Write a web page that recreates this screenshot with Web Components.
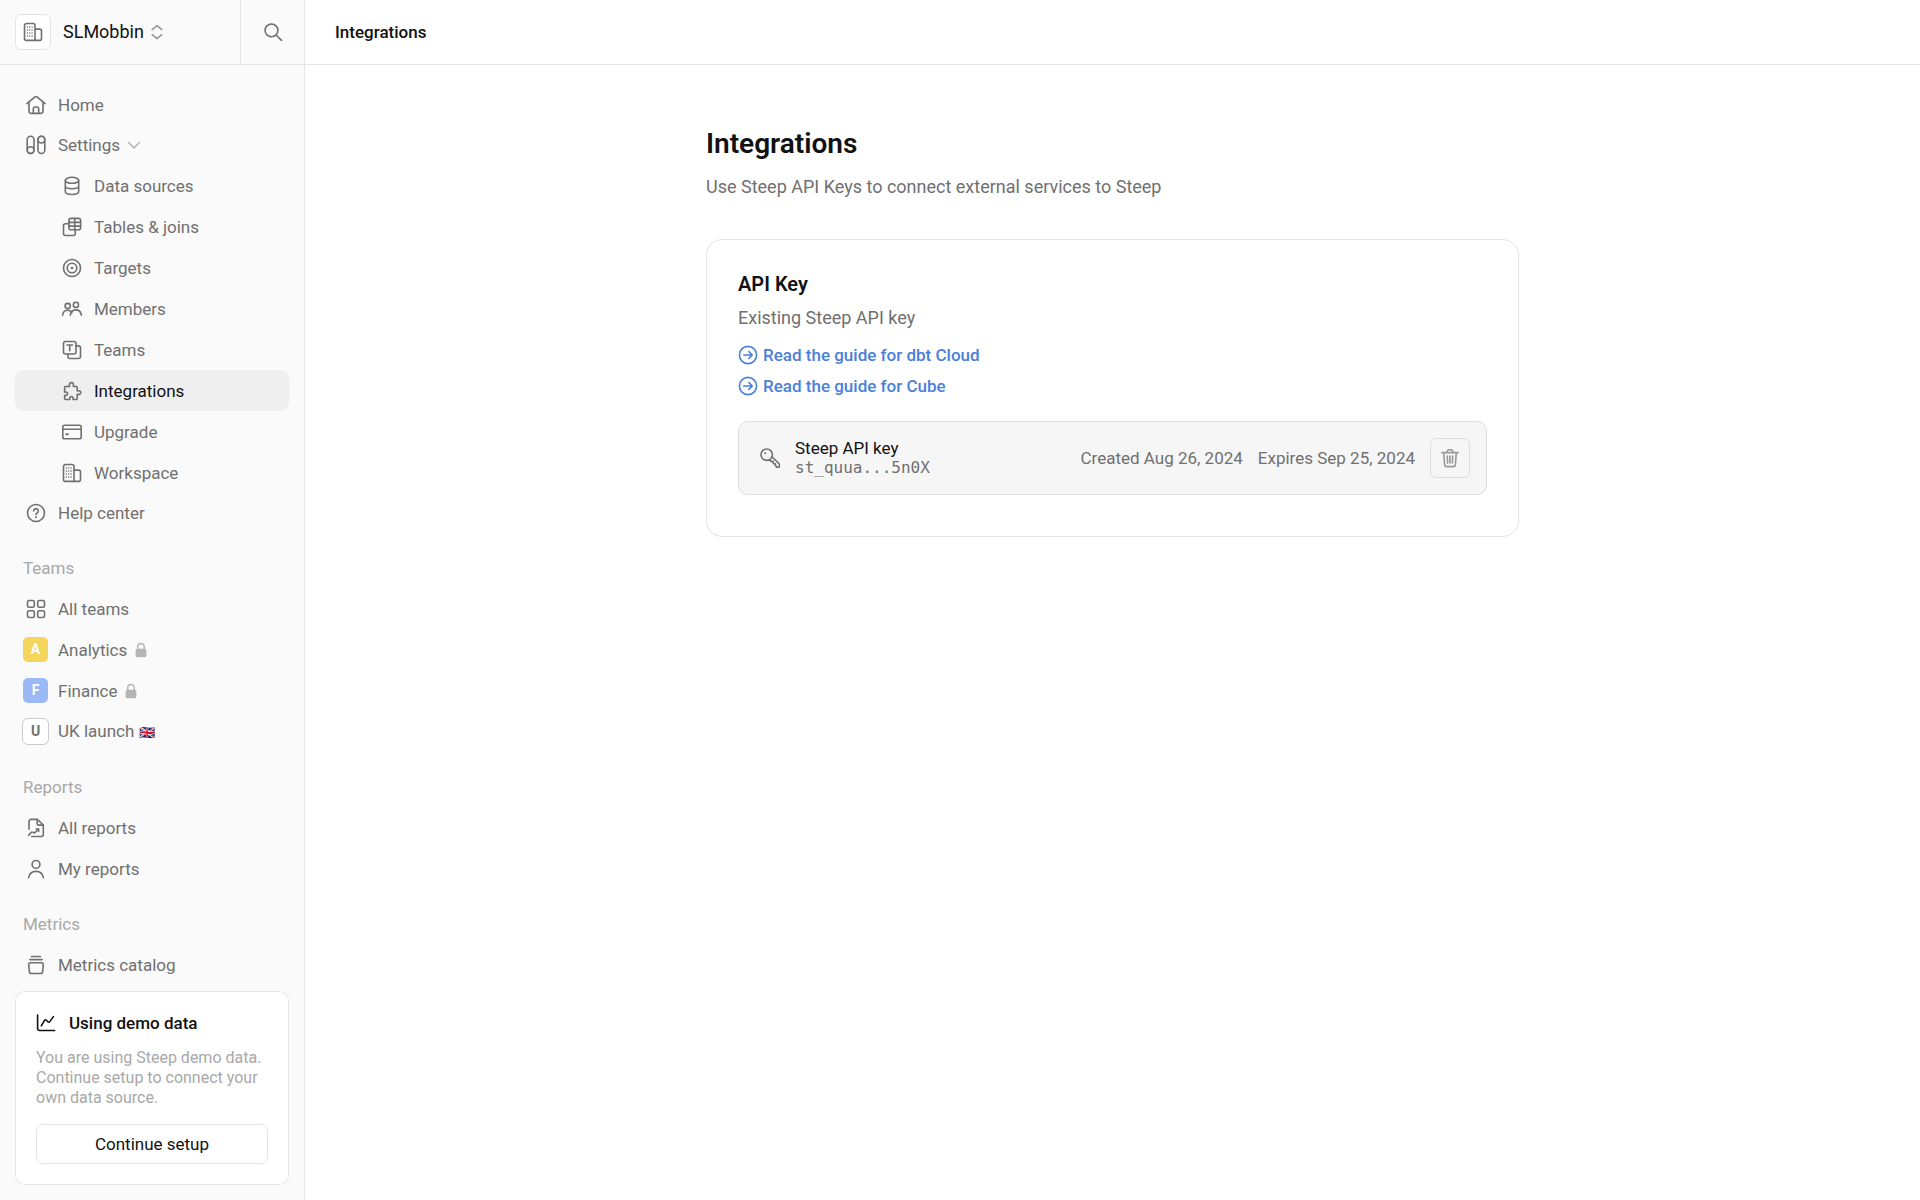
<!DOCTYPE html>
<html lang="en">
<head>
<meta charset="utf-8">
<meta name="viewport" content="width=device-width, initial-scale=1">
<title>Integrations</title>
<style>
  :root {
    --ink: #111111;
    --text: #707070;
    --muted: #a8a8a8;
    --line: #e4e4e4;
    --side: #fafafa;
    --hover: #efefef;
    --link: #4a80d9;
  }

  body {
    margin: 0;
    background: #fff;
    color: var(--ink);
    font-family: Roboto, "Liberation Sans", sans-serif;
    font-size: 17px;
    line-height: 22px;
  }
</style>
</head>
<body>

<app-shell>
  <side-bar slot="sidebar">
    <workspace-bar slot="top" name="SLMobbin"></workspace-bar>

    <nav-section>
      <nav-item icon="home">Home</nav-item>
      <nav-item icon="settings" expanded>Settings</nav-item>
      <nav-item icon="database" sub>Data sources</nav-item>
      <nav-item icon="tables" sub>Tables &amp; joins</nav-item>
      <nav-item icon="target" sub>Targets</nav-item>
      <nav-item icon="members" sub>Members</nav-item>
      <nav-item icon="teams" sub>Teams</nav-item>
      <nav-item icon="puzzle" sub active>Integrations</nav-item>
      <nav-item icon="card" sub>Upgrade</nav-item>
      <nav-item icon="building" sub>Workspace</nav-item>
      <nav-item icon="help">Help center</nav-item>
    </nav-section>

    <nav-section heading="Teams">
      <nav-item icon="grid">All teams</nav-item>
      <nav-item badge="A" color="#f3d65b" locked>Analytics</nav-item>
      <nav-item badge="F" color="#9ab9f5" locked>Finance</nav-item>
      <nav-item badge="U">UK launch <small>🇬🇧</small></nav-item>
    </nav-section>

    <nav-section heading="Reports">
      <nav-item icon="report">All reports</nav-item>
      <nav-item icon="person">My reports</nav-item>
    </nav-section>

    <nav-section heading="Metrics">
      <nav-item icon="catalog">Metrics catalog</nav-item>
    </nav-section>

    <demo-card slot="bottom" heading="Using demo data" action="Continue setup">
      You are using Steep demo data. Continue setup to connect your own data source.
    </demo-card>
  </side-bar>

  <page-header slot="header">Integrations</page-header>

  <settings-page heading="Integrations">
    <span slot="intro">Use Steep API Keys to connect external services to Steep</span>
    <settings-card heading="API Key">
      <span slot="intro">Existing Steep API key</span>
      <guide-link slot="links" href="#dbt-cloud">Read the guide for dbt Cloud</guide-link>
      <guide-link slot="links" href="#cube">Read the guide for Cube</guide-link>
      <api-key-row name="Steep API key" key-preview="st_quua...5n0X" created="Aug 26, 2024" expires="Sep 25, 2024"></api-key-row>
    </settings-card>
  </settings-page>
</app-shell>

<script>
// All icons live on a 20x20 grid and take their colour from the text.
const ICONS = {
  home: '<path d="M.9 8.6 9 1.9a1.6 1.6 0 0 1 2 0l8.100 6.700"/><path d="M3 7.200v9a2.200 2.200 0 0 0 2.200 2.200h9.600a2.200 2.200 0 0 0 2.200-2.200v-9"/><path d="M7.300 18.300v-4.600A1.700 1.700 0 0 1 9 12h2a1.700 1.700 0 0 1 1.700 1.700v4.600"/>',
  settings: '<rect x="1.200" y="1.200" width="6.800" height="17.300" rx="3.400"/><circle cx="4.600" cy="15.100" r="3.400"/><rect x="12" y="1.200" width="6.800" height="17.300" rx="3.400"/><circle cx="15.400" cy="4.600" r="3.400"/>',
  database: '<ellipse cx="10" cy="4.300" rx="6.700" ry="3"/><path d="M3.300 4.300v11.200c0 1.700 3 3 6.700 3s6.700-1.300 6.700-3V4.300M3.300 9.800c0 1.700 3 3 6.700 3s6.700-1.300 6.700-3"/>',
  tables: '<path d="M6.700 6.800H3.500a2 2 0 0 0-2 2v7.700a2 2 0 0 0 2 2h7.800a2 2 0 0 0 2-2v-3.100"/><rect x="6.900" y="1.400" width="11.700" height="11.400" rx="2"/><path d="M7 5.400h11.500M7 9.100h11.500M12.700 1.500v11.200"/>',
  target: '<circle cx="10" cy="10" r="8.500"/><circle cx="10" cy="10" r="4.800"/><circle cx="10" cy="10" r="1.300" fill="currentColor" stroke="none"/>',
  members: '<circle cx="5.700" cy="7" r="2.600"/><circle cx="13.900" cy="5.900" r="2.600"/><path d="M.6 16.200c.4-3 2.400-4.900 5-4.900 2 0 3.400 1 4.300 2.700M8.300 16.200c.4-3.200 2.600-5.300 5.500-5.300 2.800 0 5.100 2.100 5.600 5.300"/>',
  teams: '<rect x="1.500" y="1.500" width="12.500" height="12.500" rx="2"/><path d="M5 5h5.500M7.750 5v5.800M14 5.900h2.500a2 2 0 0 1 2 2v8.600a2 2 0 0 1-2 2H8a2 2 0 0 1-2-2V14"/>',
  puzzle: '<path d="M3.800 5.500h3.400c.4 0 .6-.4.4-.8a2.100 2.100 0 1 1 3.700 0c-.2.400 0 .8.4.8h2.500a1 1 0 0 1 1 1v2.900c0 .5.400.7.800.5a1.900 1.900 0 1 1 0 3.400c-.4-.2-.8 0-.8.5v3.700a1 1 0 0 1-1 1h-2.700c-.4 0-.6-.3-.5-.7a1.700 1.700 0 1 0-3.200 0c.1.400-.1.700-.5.700H3.600a1 1 0 0 1-1-1v-2.700c0-.4.300-.6.700-.5a1.700 1.700 0 1 0 0-3.200c-.4.100-.7-.1-.7-.5V6.500a1 1 0 0 1 1.200-1z"/>',
  card: '<rect x=".8" y="3.300" width="18.400" height="13.400" rx="1.800"/><path d="M.8 7.200h18.400"/><path d="M4.400 12.200h1.400" stroke-width="2"/>',
  building: '<path d="M12 18.400H3.500a2 2 0 0 1-2-2V3.500a2 2 0 0 1 2-2H10a2 2 0 0 1 2 2z"/><path d="M12 7.100h4.500a2 2 0 0 1 2 2v7.300a2 2 0 0 1-2 2H12"/><path d="M4.400 5v9.500M6.750 5v9.500M9.100 5v9.500" stroke-width="1.500" stroke-dasharray="0 3"/>',
  help: '<circle cx="10" cy="10" r="8.500"/><path d="M7.700 7.900a2.300 2.300 0 1 1 3.400 2.100c-.8.400-1.100.8-1.100 1.600"/><circle cx="10" cy="14.200" r="1" fill="currentColor" stroke="none"/>',
  grid: '<rect x="1.500" y="1.500" width="6.800" height="6.800" rx="1.600"/><rect x="11.700" y="1.500" width="6.800" height="6.800" rx="1.600"/><rect x="1.500" y="11.700" width="6.800" height="6.800" rx="1.600"/><rect x="11.700" y="11.700" width="6.800" height="6.800" rx="1.600"/>',
  report: '<path d="M3 11.200V3.400a2 2 0 0 1 2-2h6.300L17.300 7v9.500a2 2 0 0 1-2 2H5.800"/><path d="M11.100 1.600v4a1.500 1.500 0 0 0 1.500 1.500h4.600"/><path d="m2.600 17.300 2.700-2.900c.6-.6 1.300-.5 1.900 0 .7.600 1.400.6 2 0l3.200-3.200"/><path d="M10.200 11h2.400v2.400"/>',
  person: '<circle cx="10" cy="5.400" r="3.900"/><path d="M2.600 18.600c.7-3.900 3.600-6.200 7.400-6.200s6.700 2.300 7.400 6.200"/>',
  catalog: '<path d="M5.500 1.500h9M3.900 4.600h12.200"/><path d="M4.400 7.700h11.200a1.700 1.700 0 0 1 1.700 1.900l-.7 7a2.100 2.100 0 0 1-2.100 1.900h-9a2.100 2.100 0 0 1-2.100-1.900l-.7-7a1.700 1.700 0 0 1 1.700-1.900z"/>',
  search: '<circle cx="8.500" cy="8.400" r="6.400"/><path d="m13.300 13.200 5.200 5.200"/>',
  updown: '<path d="m5.200 7.700 4.800-4 4.800 4M5.200 12.700l4.800 4 4.800-4"/>',
  chevron: '<path d="m3.900 7.200 6.100 6 6.100-6"/>',
  lock: '<path d="M6.400 9V6.300a3.600 3.600 0 0 1 7.200 0V9"/><rect x="4" y="8.500" width="12" height="9.500" rx="2" fill="currentColor" stroke="none"/>',
  chart: '<path d="M1.600 2v13.500a2 2 0 0 0 2 2h15"/><path d="m5.300 12.800 3.200-5.400c.5-.8 1.300-.8 1.900-.2l1.500 1.600c.6.600 1.400.5 1.900-.2l3.600-5"/>',
  arrow: '<circle cx="10" cy="10" r="8.600"/><path d="M5.800 10h8.200M10.900 6.600l3.400 3.400-3.400 3.400"/>',
  key: '<circle cx="6.700" cy="6.700" r="5.700"/><circle cx="5.200" cy="5.200" r="1" fill="currentColor" stroke="none"/><path d="m9.400 11.800 1.700 1.600h2l.3 2.200 1.900.2.300 2.100 1.200 1.200 2.500-.2.200-2.700-7.600-7.500"/>',
  trash: '<path d="M1.700 4.600h16.600M7 4.400l.4-1.600a1.500 1.500 0 0 1 1.500-1.100h2.200a1.500 1.500 0 0 1 1.500 1.100l.4 1.600M3.700 4.800l.9 12a2 2 0 0 0 2 1.800h6.800a2 2 0 0 0 2-1.800l.9-12M7.300 8l.3 7M10 8v7M12.700 8l-.3 7"/>'
};

class UiIcon extends HTMLElement {
  connectedCallback() {
    this.attachShadow({ mode: 'open' }).innerHTML = `
      <style>
        :host {
          display: block;
          flex: none;
          width: 20px;
          height: 20px;
        }

        svg {
          display: block;
          width: 100%;
          height: 100%;
          fill: none;
          stroke: currentColor;
          stroke-width: 1.6;
          stroke-linecap: round;
          stroke-linejoin: round;
        }
      </style>
      <svg viewBox="0 0 20 20" aria-hidden="true">${ICONS[this.getAttribute('name')] || ''}</svg>
    `;
  }
}

class AppShell extends HTMLElement {
  connectedCallback() {
    this.attachShadow({ mode: 'open' }).innerHTML = `
      <style>
        :host {
          display: grid;
          grid-template-columns: 305px minmax(0, 1fr);
          height: 100vh;
        }

        .content {
          display: flex;
          flex-direction: column;
          min-width: 0;
        }

        main {
          flex: 1;
          overflow-y: auto;
        }
      </style>
      <slot name="sidebar"></slot>
      <div class="content">
        <slot name="header"></slot>
        <main><slot></slot></main>
      </div>
    `;
  }
}

class SideBar extends HTMLElement {
  connectedCallback() {
    this.attachShadow({ mode: 'open' }).innerHTML = `
      <style>
        :host {
          display: flex;
          flex-direction: column;
          min-height: 0;
          box-sizing: border-box;
          background: var(--side);
          border-right: 1px solid var(--line);
        }

        nav {
          flex: 1;
          min-height: 0;
          padding: 20px 15px 0;
          overflow: hidden;
        }

        .bottom {
          padding: 0 15px 15px;
        }
      </style>
      <slot name="top"></slot>
      <nav aria-label="Main"><slot></slot></nav>
      <div class="bottom"><slot name="bottom"></slot></div>
    `;
  }
}

class WorkspaceBar extends HTMLElement {
  connectedCallback() {
    this.attachShadow({ mode: 'open' }).innerHTML = `
      <style>
        :host {
          display: flex;
          height: 64px;
          border-bottom: 1px solid var(--line);
        }

        button {
          display: flex;
          align-items: center;
          margin: 0;
          padding: 0;
          border: 0;
          background: none;
          color: var(--ink);
          font: inherit;
          cursor: pointer;
        }

        .workspace {
          flex: 1;
          gap: 12px;
          padding-left: 15px;
          font-size: 18px;
        }

        .logo {
          display: grid;
          place-items: center;
          width: 34px;
          height: 34px;
          border: 1px solid var(--line);
          border-radius: 6px;
          background: #fff;
          color: var(--text);
        }

        .name {
          display: flex;
          align-items: center;
          gap: 3px;
        }

        .name ui-icon {
          color: #999;
        }

        .search {
          justify-content: center;
          width: 64px;
          border-left: 1px solid var(--line);
          color: var(--text);
        }
      </style>
      <button class="workspace" type="button">
        <span class="logo"><ui-icon name="building"></ui-icon></span>
        <span class="name">${this.getAttribute('name')} <ui-icon name="updown"></ui-icon></span>
      </button>
      <button class="search" type="button" aria-label="Search"><ui-icon name="search"></ui-icon></button>
    `;
  }
}

class NavSection extends HTMLElement {
  connectedCallback() {
    const heading = this.getAttribute('heading');
    this.attachShadow({ mode: 'open' }).innerHTML = `
      <style>
        :host {
          display: block;
        }

        :host([heading]) {
          --row: 41px;
        }

        h2 {
          margin: 15px 0 0;
          padding-left: 8px;
          color: var(--muted);
          font-size: 17px;
          font-weight: 400;
          line-height: 40px;
        }
      </style>
      ${heading ? `<h2>${heading}</h2>` : ''}
      <slot></slot>
    `;
  }
}

class NavItem extends HTMLElement {
  connectedCallback() {
    const badge = this.getAttribute('badge');
    const color = this.getAttribute('color');
    const mark = badge
      ? `<span class="badge ${color ? 'filled' : ''}" style="${color ? `background: ${color}` : ''}">${badge}</span>`
      : `<ui-icon name="${this.getAttribute('icon')}"></ui-icon>`;

    this.attachShadow({ mode: 'open' }).innerHTML = `
      <style>
        :host {
          display: block;
          color: var(--text);
        }

        :host([sub]) {
          --row: 41px;
        }

        a {
          display: flex;
          align-items: center;
          gap: 10px;
          height: var(--row, 40px);
          padding: 0 8px;
          border-radius: 8px;
          color: inherit;
          text-decoration: none;
        }

        :host([sub]) a {
          padding-left: 44px;
        }

        :host([active]) a {
          background: var(--hover);
        }

        :host([active]) .label {
          color: var(--ink);
        }

        .mark {
          display: flex;
          justify-content: center;
          flex: none;
          width: 25px;
        }

        .label {
          display: flex;
          align-items: center;
          gap: 5px;
          white-space: nowrap;
        }

        .badge {
          flex: none;
          box-sizing: border-box;
          width: 27px;
          height: 27px;
          border: 1px solid #ccc;
          border-radius: 6px;
          background: #fff;
          font-size: 14px;
          font-weight: 700;
          line-height: 25px;
          text-align: center;
        }

        .badge.filled {
          width: 25px;
          height: 25px;
          border: 0;
          border-radius: 5px;
          color: #fff;
        }

        .tail {
          width: 18px;
          height: 18px;
          color: #b5b5b5;
        }

        ::slotted(small) {
          font-size: 13px;
        }
      </style>
      <a href="#" ${this.hasAttribute('active') ? 'aria-current="page"' : ''}>
        <span class="mark">${mark}</span>
        <span class="label">
          <span><slot></slot></span>
          ${this.hasAttribute('expanded') ? '<ui-icon class="tail" name="chevron"></ui-icon>' : ''}
          ${this.hasAttribute('locked') ? '<ui-icon class="tail" name="lock"></ui-icon>' : ''}
        </span>
      </a>
    `;
  }
}

class DemoCard extends HTMLElement {
  connectedCallback() {
    this.attachShadow({ mode: 'open' }).innerHTML = `
      <style>
        :host {
          display: block;
          padding: 20px;
          border: 1px solid var(--line);
          border-radius: 10px;
          background: #fff;
        }

        h2 {
          display: flex;
          align-items: center;
          gap: 13px;
          margin: 0;
          font-size: 17px;
          font-weight: 500;
          line-height: 22px;
        }

        p {
          margin: 14px 0 16px;
          color: var(--muted);
          font-size: 16px;
          line-height: 20px;
        }

        button {
          display: block;
          width: 100%;
          height: 40px;
          border: 1px solid var(--line);
          border-radius: 6px;
          background: #fff;
          color: var(--ink);
          font: inherit;
          cursor: pointer;
        }
      </style>
      <h2><ui-icon name="chart"></ui-icon>${this.getAttribute('heading')}</h2>
      <p><slot></slot></p>
      <button type="button">${this.getAttribute('action')}</button>
    `;
  }
}

class PageHeader extends HTMLElement {
  connectedCallback() {
    this.attachShadow({ mode: 'open' }).innerHTML = `
      <style>
        :host {
          display: flex;
          align-items: center;
          height: 64px;
          padding: 0 30px;
          border-bottom: 1px solid var(--line);
          font-size: 17px;
          font-weight: 500;
        }
      </style>
      <header><slot></slot></header>
    `;
  }
}

class SettingsPage extends HTMLElement {
  connectedCallback() {
    this.attachShadow({ mode: 'open' }).innerHTML = `
      <style>
        :host {
          display: block;
          max-width: 813px;
          margin: 0 auto;
          padding: 60px 24px;
        }

        h1 {
          margin: 0;
          font-size: 28px;
          font-weight: 600;
          line-height: 38px;
        }

        p {
          margin: 12px 0 40px;
          color: var(--text);
          font-size: 18px;
          line-height: 24px;
        }
      </style>
      <h1>${this.getAttribute('heading')}</h1>
      <p><slot name="intro"></slot></p>
      <slot></slot>
    `;
  }
}

class SettingsCard extends HTMLElement {
  connectedCallback() {
    this.attachShadow({ mode: 'open' }).innerHTML = `
      <style>
        :host {
          display: block;
          padding: 30px 31px 41px;
          border: 1px solid var(--line);
          border-radius: 16px;
        }

        h2 {
          margin: 0;
          font-size: 20px;
          font-weight: 600;
          line-height: 28px;
        }

        p {
          margin: 8px 0 10px;
          color: var(--text);
          font-size: 18px;
          line-height: 24px;
        }

        .links {
          display: flex;
          flex-direction: column;
          align-items: flex-start;
          gap: 1px;
          margin-bottom: 20px;
        }
      </style>
      <h2>${this.getAttribute('heading')}</h2>
      <p><slot name="intro"></slot></p>
      <div class="links"><slot name="links"></slot></div>
      <slot></slot>
    `;
  }
}

class GuideLink extends HTMLElement {
  connectedCallback() {
    this.attachShadow({ mode: 'open' }).innerHTML = `
      <style>
        :host {
          display: block;
        }

        a {
          display: flex;
          align-items: center;
          gap: 5px;
          height: 30px;
          color: var(--link);
          font-weight: 500;
          text-decoration: none;
        }
      </style>
      <a href="${this.getAttribute('href')}"><ui-icon name="arrow"></ui-icon><span><slot></slot></span></a>
    `;
  }
}

class ApiKeyRow extends HTMLElement {
  connectedCallback() {
    this.attachShadow({ mode: 'open' }).innerHTML = `
      <style>
        :host {
          display: flex;
          align-items: center;
          gap: 15px;
          padding: 16px 16px 16px 21px;
          border: 1px solid #dedede;
          border-radius: 10px;
          background: #f6f6f6;
          color: var(--text);
        }

        .info {
          flex: 1;
          display: flex;
          flex-direction: column;
          line-height: 20px;
        }

        .name {
          color: var(--ink);
        }

        code {
          font-family: "DejaVu Sans Mono", monospace;
          font-size: 16px;
        }

        button {
          display: grid;
          place-items: center;
          width: 40px;
          height: 40px;
          padding: 0;
          border: 1px solid #dedede;
          border-radius: 6px;
          background: none;
          color: #999;
          cursor: pointer;
        }
      </style>
      <ui-icon name="key"></ui-icon>
      <div class="info">
        <span class="name">${this.getAttribute('name')}</span>
        <code>${this.getAttribute('key-preview')}</code>
      </div>
      <span>Created ${this.getAttribute('created')}</span>
      <span>Expires ${this.getAttribute('expires')}</span>
      <button type="button" aria-label="Delete key"><ui-icon name="trash"></ui-icon></button>
    `;
  }
}

customElements.define('ui-icon', UiIcon);
customElements.define('app-shell', AppShell);
customElements.define('side-bar', SideBar);
customElements.define('workspace-bar', WorkspaceBar);
customElements.define('nav-section', NavSection);
customElements.define('nav-item', NavItem);
customElements.define('demo-card', DemoCard);
customElements.define('page-header', PageHeader);
customElements.define('settings-page', SettingsPage);
customElements.define('settings-card', SettingsCard);
customElements.define('guide-link', GuideLink);
customElements.define('api-key-row', ApiKeyRow);
</script>
</body>
</html>
